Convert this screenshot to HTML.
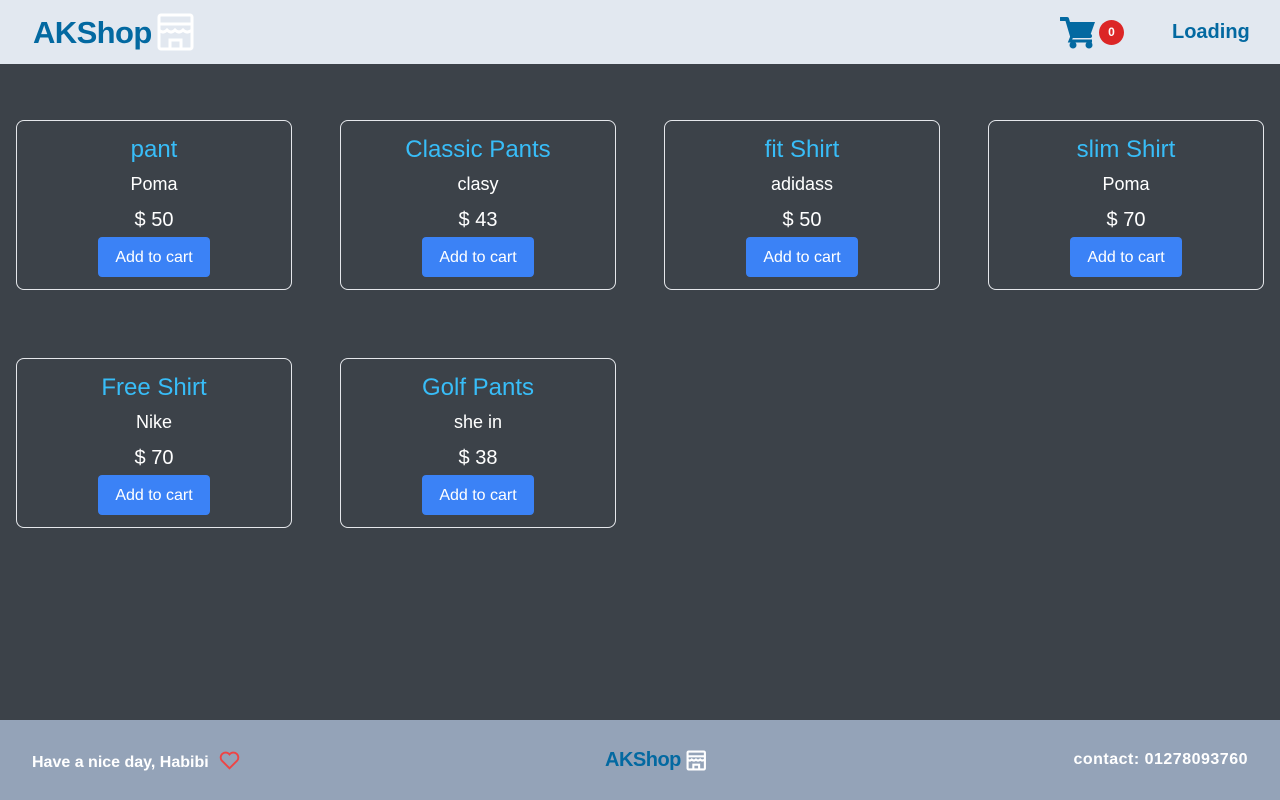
<!DOCTYPE html>
<html><head><meta charset="utf-8"><style>
*{box-sizing:border-box;margin:0;padding:0}
body{width:1280px;height:800px;background:#3c4249;font-family:"Liberation Sans",sans-serif;position:relative;overflow:hidden}
header{position:absolute;top:0;left:0;width:1280px;height:64px;background:#e2e8f0}
.logo{position:absolute;left:33px;top:15px;font-size:31px;font-weight:bold;color:#0369a1;letter-spacing:-0.6px}
.store{position:absolute}
.cart{position:absolute;left:1060px;top:16px}
.badge{position:absolute;left:1099px;top:20px;width:25px;height:25px;border-radius:50%;background:#dc2626;color:#fff;font-size:12px;font-weight:bold;text-align:center;line-height:25px}
.loading{position:absolute;left:1172px;top:21px;font-size:20px;font-weight:bold;color:#0369a1}
.card{position:absolute;width:276px;height:170px;border:1px solid #e5e7eb;border-radius:8px;text-align:center;color:#fff}
.card h2{position:absolute;top:15px;width:100%;font-size:24px;font-weight:normal;color:#38bdf8}
.card .b{position:absolute;top:53px;width:100%;font-size:18px}
.card .p{position:absolute;top:88px;width:100%;font-size:20px}
.card button{position:absolute;left:81px;top:116px;width:112px;height:40px;border:none;border-radius:4px;background:#3b82f6;color:#fff;font-size:16px;font-family:inherit;padding-top:1px}
footer{position:absolute;top:720px;left:0;width:1280px;height:80px;background:#94a3b8;color:#fff;font-weight:bold}
</style></head><body>
<header>
<div class="logo">AKShop</div>
<svg class="store" style="left:156px;top:12px" width="40" height="40" viewBox="0 0 40 40" fill="none" stroke="#fff" stroke-width="3"><rect x="3" y="3" width="33" height="34" rx="2"/><path d="M3 12h33M3 18q4 4 8 0q4 4 8 0q4 4 8 0q4 4 9 0M14 37v-9h11v9"/></svg>
<svg class="cart" width="36" height="33" viewBox="0 0 36 33"><path d="M1 3h6l5 17h18" fill="none" stroke="#0369a1" stroke-width="4" stroke-linecap="round" stroke-linejoin="round"/><path d="M8 6h27l-5 14H12z" fill="#0369a1"/><path d="M12 20l-2 5h22" fill="none" stroke="#0369a1" stroke-width="3"/><circle cx="13" cy="29" r="3.5" fill="#0369a1"/><circle cx="29" cy="29" r="3.5" fill="#0369a1"/></svg>
<div class="badge">0</div>
<div class="loading">Loading</div>
</header>
<div class="card" style="left:16px;top:120px"><h2>pant</h2><div class="b">Poma</div><div class="p">$ 50</div><button>Add to cart</button></div>
<div class="card" style="left:340px;top:120px"><h2>Classic Pants</h2><div class="b">clasy</div><div class="p">$ 43</div><button>Add to cart</button></div>
<div class="card" style="left:664px;top:120px"><h2>fit Shirt</h2><div class="b">adidass</div><div class="p">$ 50</div><button>Add to cart</button></div>
<div class="card" style="left:988px;top:120px"><h2>slim Shirt</h2><div class="b">Poma</div><div class="p">$ 70</div><button>Add to cart</button></div>
<div class="card" style="left:16px;top:358px"><h2>Free Shirt</h2><div class="b">Nike</div><div class="p">$ 70</div><button>Add to cart</button></div>
<div class="card" style="left:340px;top:358px"><h2>Golf Pants</h2><div class="b">she in</div><div class="p">$ 38</div><button>Add to cart</button></div>
<footer>
<div style="position:absolute;left:32px;top:34px;font-size:16px">Have a nice day, Habibi</div>
<svg style="position:absolute;left:219px;top:31px" width="21" height="19" viewBox="0 0 24 22"><path d="M12 20L3 11a5 5 0 0 1 9-7a5 5 0 0 1 9 7z" fill="none" stroke="#ef4444" stroke-width="2.2"/></svg>
<div style="position:absolute;left:605px;top:29px;font-size:20px;font-weight:bold;color:#0369a1;letter-spacing:-0.5px">AKShop</div>
<svg style="position:absolute;left:686px;top:30px" width="21" height="21" viewBox="0 0 40 40" fill="none" stroke="#fff" stroke-width="4"><rect x="3" y="3" width="33" height="34" rx="2"/><path d="M3 12h33M3 18q4 4 8 0q4 4 8 0q4 4 8 0q4 4 9 0M14 37v-9h11v9"/></svg>
<div style="position:absolute;right:32px;top:31px;font-size:16px;letter-spacing:0.5px">contact: 01278093760</div>
</footer>
</body></html>
